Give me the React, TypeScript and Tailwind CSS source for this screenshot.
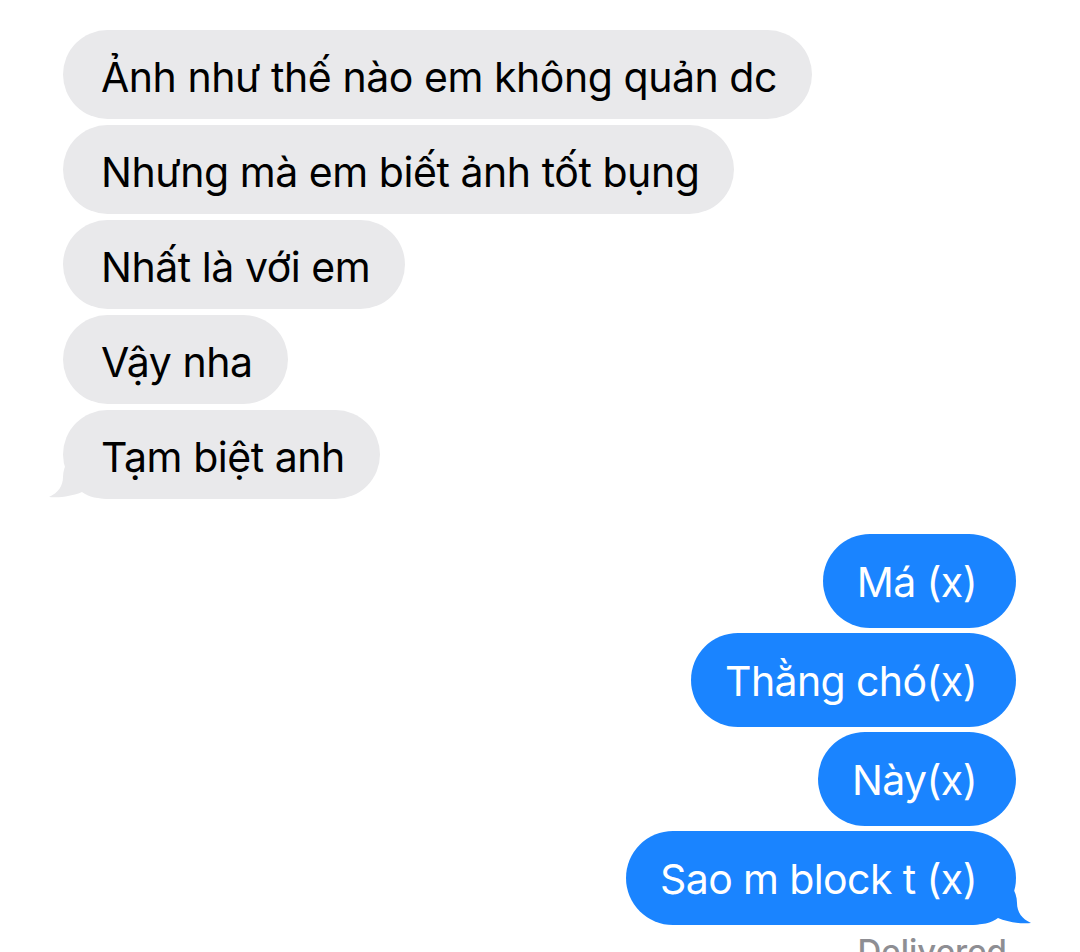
const incoming = [
  "Ảnh như thế nào em không quản dc",
  "Nhưng mà em biết ảnh tốt bụng",
  "Nhất là với em",
  "Vậy nha",
  "Tạm biệt anh",
];

const outgoing = ["Má (x)", "Thằng chó(x)", "Này(x)", "Sao m block t (x)"];

const Tail = ({ color, flip }: { color: string; flip?: boolean }) => (
  <svg
    width="64"
    height="40"
    viewBox="0 0 64 40"
    className={
      flip
        ? "absolute bottom-0 -right-[15px] -scale-x-100"
        : "absolute bottom-0 -left-[14px]"
    }
  >
    <path
      d="M20 0 C16 6 14 12 14 18 C14 27 9 34 0 38 C11 39 24 37 33 33 C40 38 48 40 64 40 L64 0 Z"
      fill={color}
    />
  </svg>
);

export default function App() {
  return (
    <div
      className="w-[1080px] h-[952px] overflow-hidden bg-white"
      style={{ fontFamily: "Inter, 'Noto Sans', sans-serif" }}
    >
      <div className="flex flex-col items-start gap-[6px] pt-[30px] pl-[63px]">
        {incoming.map((msg, i) => (
          <div
            key={i}
            className="relative flex items-center h-[89px] rounded-[45px] bg-[#e9e9eb] pt-[7px] pl-[38px] pr-[35px] text-[41px] text-black tracking-[-0.45px] whitespace-nowrap"
          >
            {i === incoming.length - 1 && <Tail color="#e9e9eb" />}
            <span className="relative">{msg}</span>
          </div>
        ))}
      </div>

      <div className="flex flex-col items-end gap-[5px] pt-[35px] pr-[64px]">
        {outgoing.map((msg, i) => (
          <div
            key={i}
            className="relative flex items-center h-[94px] rounded-[47px] bg-[#1a84ff] pt-[3px] pl-[34px] pr-[39px] text-[41px] text-white tracking-[-0.6px] whitespace-nowrap"
          >
            {i === outgoing.length - 1 && <Tail color="#1a84ff" flip />}
            <span className="relative">{msg}</span>
          </div>
        ))}
        <div className="mt-[5px] mr-[9px] text-[33px] font-medium text-[#8e8e93] leading-none">
          Delivered
        </div>
      </div>
    </div>
  );
}
